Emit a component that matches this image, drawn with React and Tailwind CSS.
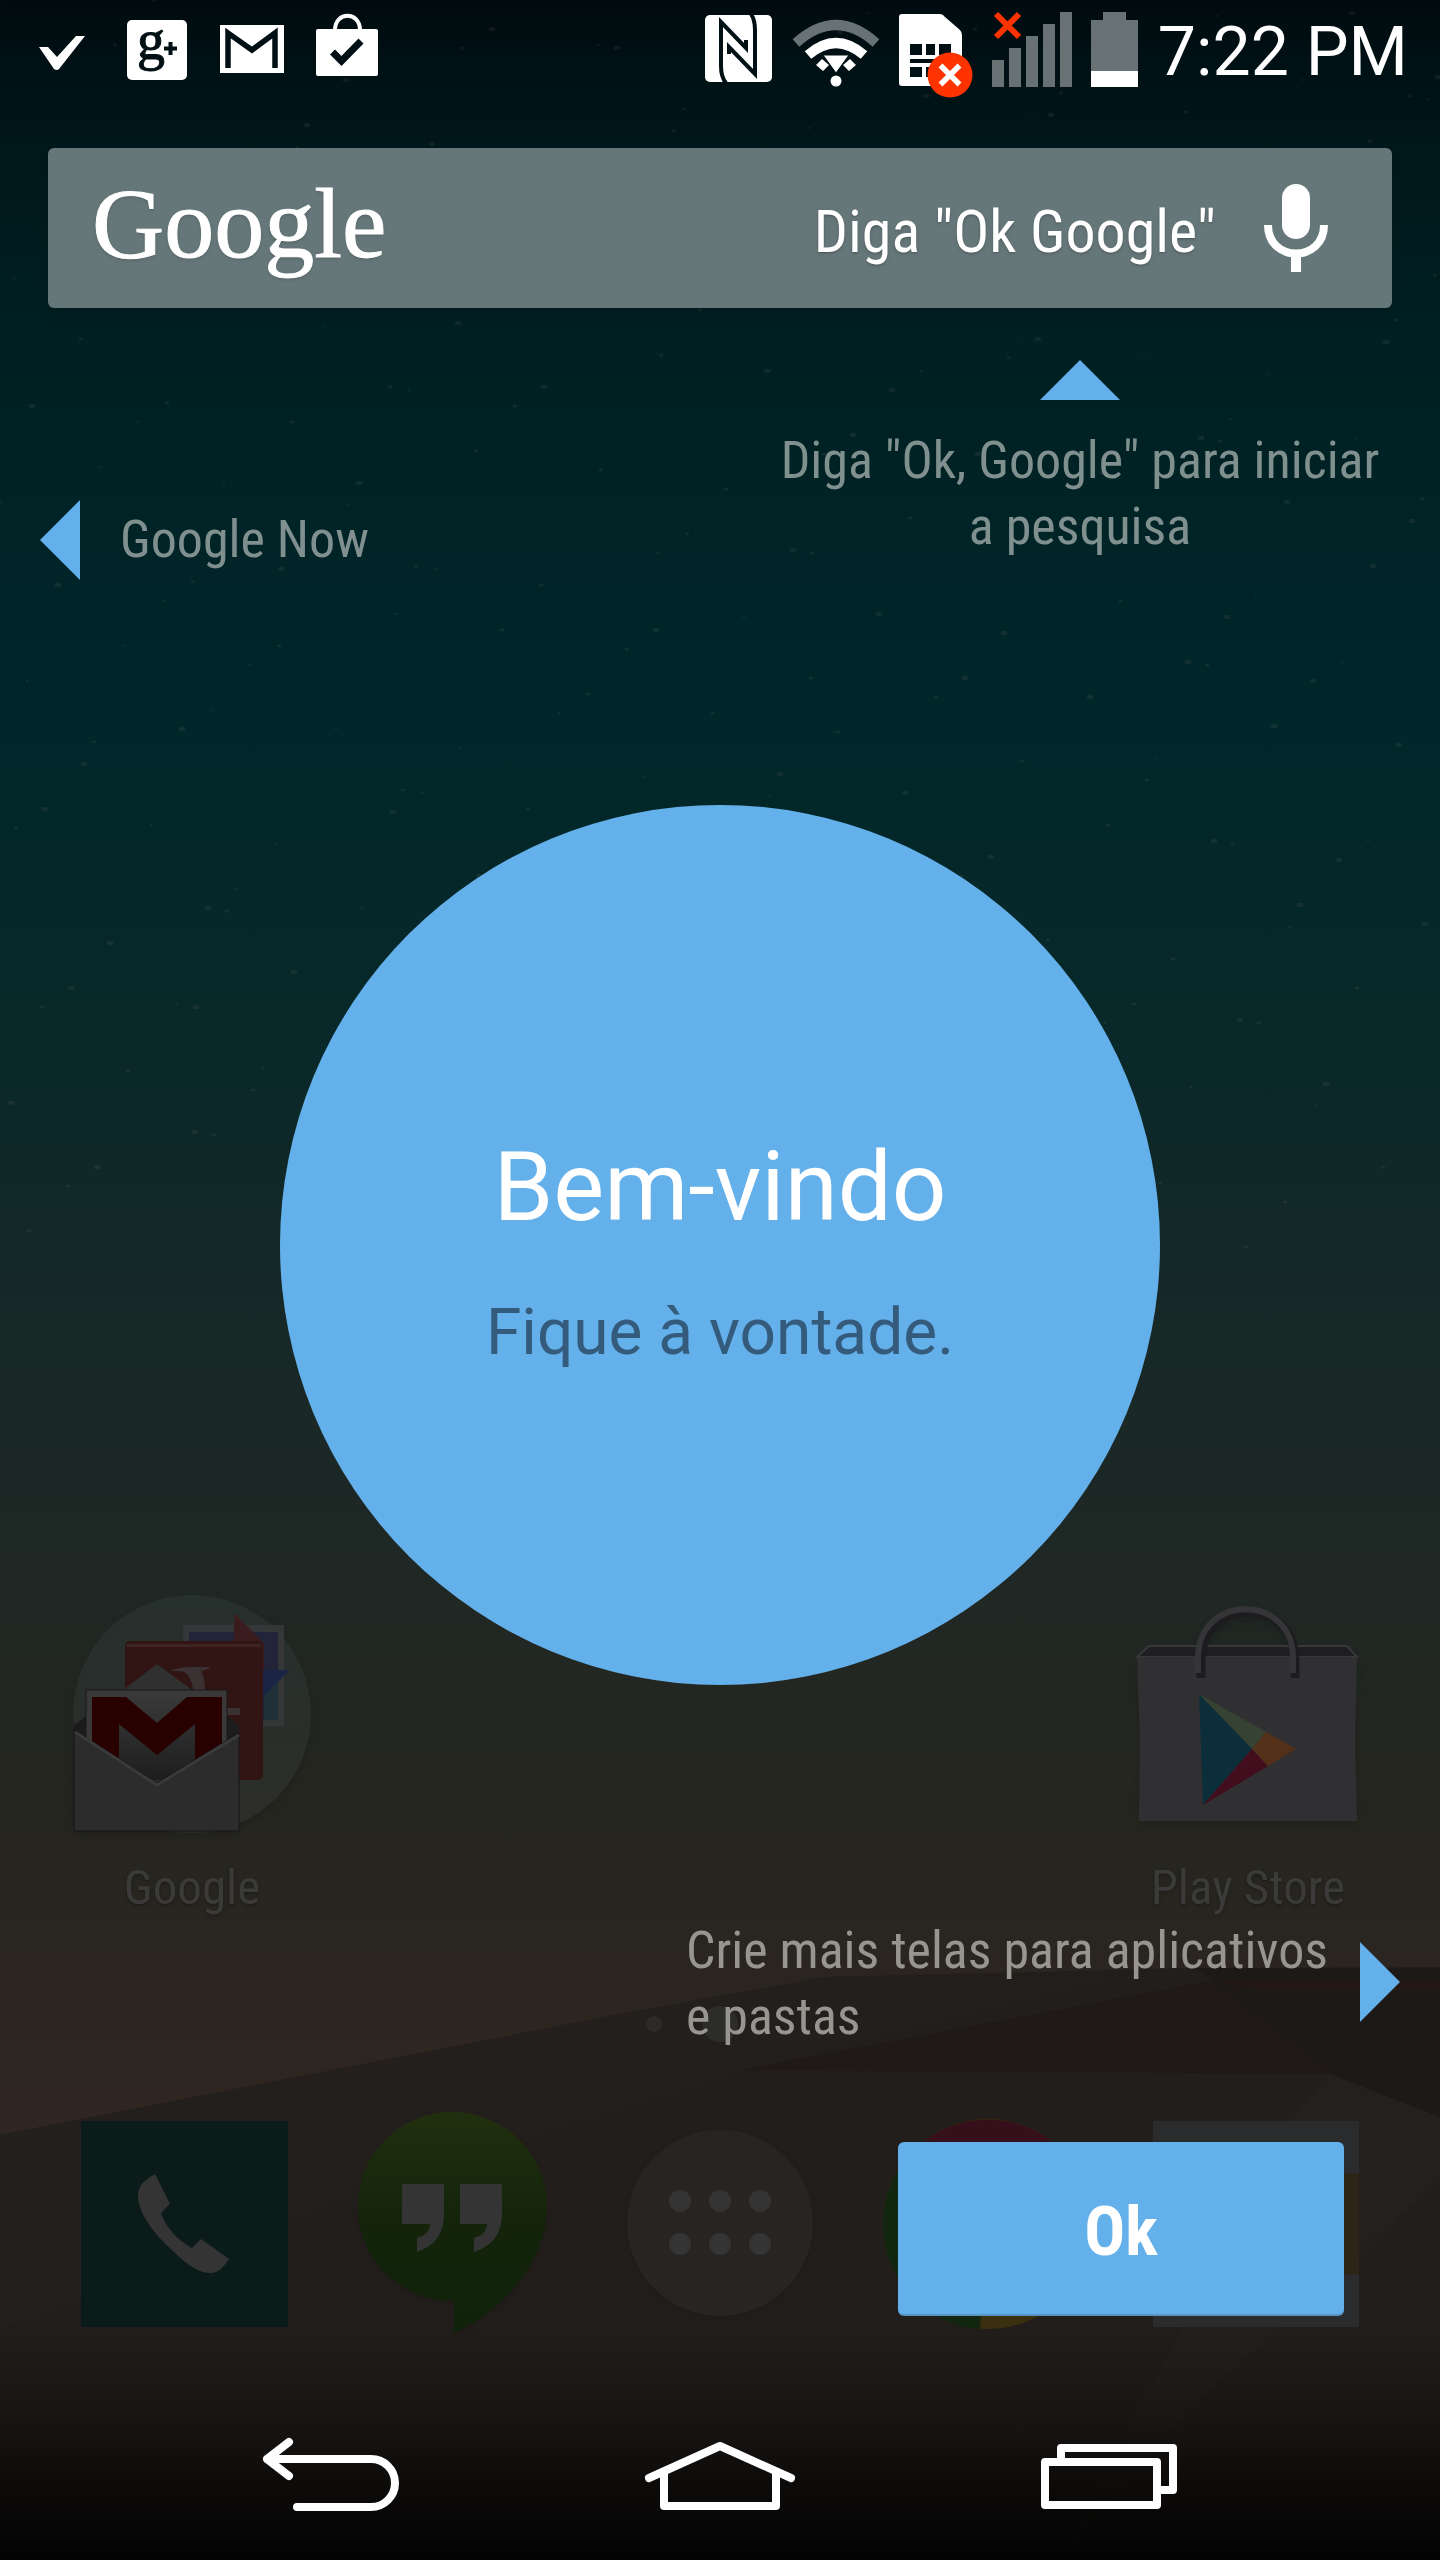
// src/App.jsx
import React from 'react';

// fixed specks for the night sky
const stars = Array.from({ length: 260 }, (_, i) => ({
    x: (i * 733 + (i % 7) * 91) % 1440,
    y: (i * 397 + (i % 11) * 57) % 1250,
    r: 1 + (i % 3) * 0.6,
}));

const Wallpaper = () => (
    <svg
        aria-hidden="true"
        className="col-start-1 row-start-1 h-full w-full"
        viewBox="0 0 1440 2560"
        preserveAspectRatio="none"
    >
        <defs>
            <linearGradient id="sky" x1="0" y1="0" x2="0" y2="2140" gradientUnits="userSpaceOnUse">
                <stop offset="0" stopColor="#000b0f" />
                <stop offset="0.06" stopColor="#00161a" />
                <stop offset="0.16" stopColor="#002023" />
                <stop offset="0.34" stopColor="#00272a" />
                <stop offset="0.48" stopColor="#082829" />
                <stop offset="0.6" stopColor="#152827" />
                <stop offset="0.73" stopColor="#1f2825" />
                <stop offset="0.83" stopColor="#252620" />
                <stop offset="0.92" stopColor="#2a2520" />
                <stop offset="1" stopColor="#302621" />
            </linearGradient>
            <linearGradient id="fade" x1="0" y1="0" x2="0" y2="1">
                <stop offset="0" stopColor="#000" stopOpacity="0" />
                <stop offset="0.4" stopColor="#000" stopOpacity="0.3" />
                <stop offset="0.75" stopColor="#000" stopOpacity="0.7" />
                <stop offset="1" stopColor="#000" stopOpacity="0.9" />
            </linearGradient>
        </defs>
        <rect width="1440" height="2560" fill="url(#sky)" />
        { stars.map((star, index) => (
            <ellipse key={ index } cx={ star.x } cy={ star.y } rx={ star.r * 1.5 } ry={ star.r } fill="#d8b0a0" opacity="0.08" />
        )) }
        <path d="M0 2135L620 2014L827 1977L1195 1968L1440 1967V2560H0Z" fill="#221e1b" />
        <path d="M0 2135L620 2014L827 1977L1120 1975L740 2072L420 2170L0 2330Z" fill="#231f1c" />
        <path d="M740 2070L1215 1980L1440 1985V2117L1330 2074Z" fill="#1f1a17" />
        <path d="M1195 1968H1440V2117L1330 2072Z" fill="#1d1916" />
        <path d="M1215 1981H1440V1990H1260Z" fill="#241814" />
        <path d="M1330 2074L1440 2117V2180L1200 2400L1060 2560L1290 2120Z" fill="#24201d" />
        <rect y="2320" width="1440" height="240" fill="url(#fade)" />
    </svg>
);

const StatusBar = () => (
    <header className="flex h-[100px] items-center justify-between pl-[30px] pr-8 text-white">
        <div className="flex gap-[31px]">
            <svg className="h-[100px] w-16" viewBox="30 0 64 100" fill="#fff">
                <path d="M39 47H48L57 57L76 36H85L59 69Q57 71 54 69Z" />
            </svg>
            <svg className="h-[100px] w-16" viewBox="124 0 64 100">
                <rect x="126" y="20" width="60" height="60" rx="5" fill="#fff" />
                <text x="136" y="59" fontFamily="Liberation Serif, serif" fontSize="56" fill="#001015" stroke="#001015">g</text>
                <path d="M163 48.500H176M169.500 42V55" stroke="#001015" strokeWidth="4" />
            </svg>
            <svg className="h-[100px] w-16" viewBox="220 0 64 100">
                <path d="M220 25H284V73H220Z" fill="#fff" />
                <path d="M228 68V33L252 50L275 33V68" fill="none" stroke="#001015" strokeWidth="5.500" />
            </svg>
            <svg className="h-[100px] w-16" viewBox="315 0 64 100">
                <rect x="316" y="29" width="62" height="47" rx="2" fill="#fff" />
                <path d="M335 30C335 11 360 11 360 30" fill="none" stroke="#fff" strokeWidth="4" />
                <path d="M332.500 52L341.500 61L361 41" fill="none" stroke="#001015" strokeWidth="7" />
            </svg>
        </div>
        <div className="flex items-center gap-[19px]">
            <svg className="h-[100px] w-[68px]" viewBox="708 0 68 100">
                <rect x="708" y="15" width="67" height="67" rx="5" fill="#fff" />
                <path d="M729 83Q724 77 724 66V22L749 48V40" fill="none" stroke="#001015" strokeWidth="4" />
                <path d="M754 14Q758 20 758 30V74L732 47V54" fill="none" stroke="#001015" strokeWidth="4" />
            </svg>
            <svg className="h-[100px] w-[88px]" viewBox="794 0 88 100">
                <path d="M798 43Q838 7 878 43" fill="none" stroke="#687174" strokeWidth="10" />
                <path d="M810 55Q838 31 866 55" fill="none" stroke="#fff" strokeWidth="10" />
                <path d="M824 59L818 65L825 71L831 65ZM852 59L858 65L851 71L845 65Z" fill="#fff" />
                <path d="M825 55H851L838 73Z" fill="#fff" stroke="#001015" />
                <circle cx="838" cy="81" r="5.500" fill="#fff" />
            </svg>
            <svg className="h-[100px] w-[74px]" viewBox="900 0 74 100">
                <path d="M903 14H941Q944 14 946 17L961 30Q963 32 963 35V83Q963 86 960 86H903Q900 86 900 83V17Q900 14 903 14Z" fill="#fff" />
                <path d="M911 44H923V55H911ZM927 44H936V55H927ZM940 44H952V55H940ZM911 59H952V63H911ZM911 67H923V77H911ZM927 67H936V77H927Z" fill="#001015" />
                <circle cx="951" cy="75" r="22.500" fill="#ff3300" />
                <path d="M941.500 65.500L960.500 84.500M960.500 65.500L941.500 84.500" stroke="#fff" strokeWidth="5.500" />
            </svg>
            <svg className="h-[100px] w-20" viewBox="991 0 80 100">
                <path d="M995 14L1018 37M1018 14L995 37" stroke="#ff3300" strokeWidth="6" />
                <path d="M991 60H1003V87H991ZM1008 48H1020V87H1008ZM1025 36H1037V87H1025ZM1042 24H1054V87H1042ZM1059 12H1071V87H1059Z" fill="#687174" />
            </svg>
            <svg className="h-[100px] w-12" viewBox="1094 0 48 100">
                <path d="M1094 20H1106V12H1129V20H1141V71H1094Z" fill="#687174" />
                <path d="M1094 71H1141V87H1094Z" fill="#fff" />
            </svg>
            <time className="pt-1 font-[Roboto,sans-serif] text-[68px] leading-[96px]">7:22 PM</time>
        </div>
    </header>
);

const SearchBar = () => (
    <div className="mx-12 mt-12 flex h-40 items-center justify-between rounded-md bg-[#66777a] pl-11 pr-16 text-white shadow-lg">
        <span className="pb-2 font-['Liberation_Serif',serif] text-[100px] leading-[100px] [-webkit-text-stroke:1px_white] text-shadow-md">Google</span>
        <button type="button" className="flex items-center gap-12 text-shadow-md">
            <span className="pt-2 text-[60px]">Diga "Ok Google"</span>
            <svg aria-hidden="true" className="h-[88px] w-16" viewBox="1264 184 64 88">
                <rect x="1282" y="184" width="28" height="55" rx="14" fill="#fff" />
                <path d="M1268 225C1268 263 1324 263 1324 225" fill="none" stroke="#fff" strokeWidth="8" />
                <path d="M1291 254H1301V272H1291Z" fill="#fff" />
            </svg>
        </button>
    </div>
);

const GoogleFolder = () => (
    <svg aria-hidden="true" className="h-60 w-60 drop-shadow-lg" viewBox="72 1594 240 240">
        <defs>
            <linearGradient id="folder" x1="0" y1="0" x2="0" y2="1">
                <stop offset="0" stopColor="#26302d" />
                <stop offset="1" stopColor="#2d2d28" />
            </linearGradient>
            <linearGradient id="letter" x1="0" y1="0" x2="0" y2="1">
                <stop offset="0" stopColor="#383838" />
                <stop offset="1" stopColor="#1e1e1e" />
            </linearGradient>
        </defs>
        <circle cx="192" cy="1714" r="119" fill="url(#folder)" />
        <rect x="183" y="1625" width="101" height="101" fill="#343638" />
        <rect x="189" y="1632" width="89" height="88" fill="#222539" />
        <path d="M264 1675H278V1720H264Z" fill="#203038" />
        <path d="M234 1613L264 1643V1675H234Z" fill="#3a1c1e" />
        <path d="M262 1670H290L262 1698Z" fill="#1c2444" />
        <rect x="125" y="1641" width="138" height="139" rx="5" fill="#301514" />
        <path d="M127 1644H261V1647H127Z" fill="#3d2422" />
        <path d="M170 1671Q180 1667 190 1667H211Q207 1670 201 1671Q205 1677 205 1690H193Q191 1672 180 1671ZM224 1708H240V1715H224Z" fill="#3a3232" />
        <path d="M74 1725L86 1716H227L239 1725V1750H74Z" fill="#1c1c1c" />
        <path d="M123 1690L157 1664L192 1690Z" fill="#303030" />
        <rect x="86" y="1690" width="141" height="86" fill="#393939" stroke="#181818" />
        <path d="M92 1697H222V1780H92Z" fill="url(#letter)" />
        <path d="M92 1697H126L157 1723L187 1697H222V1770H195V1724L157 1755L119 1724V1770H92Z" fill="#290000" />
        <path d="M74 1730L157 1783L239 1733V1831H74Z" fill="#2c2c2c" stroke="#161616" />
        <path d="M75 1732L157 1785L239 1735" fill="none" stroke="#3a3a3a" strokeWidth="3" />
    </svg>
);

const PlayStore = () => (
    <svg aria-hidden="true" className="h-60 w-60 drop-shadow-lg" viewBox="1129 1594 240 240">
        <path d="M1138 1657L1150 1646H1348L1358 1657Z" fill="#1e1e20" stroke="#38383a" strokeWidth="2" />
        <path d="M1138 1657H1358L1356 1740L1358 1821H1140L1141 1740Z" fill="#303032" />
        <path d="M1202 1678V1661C1202 1596 1296 1596 1296 1661V1678" fill="none" stroke="#1c1c1e" strokeWidth="9" />
        <path d="M1199 1673V1658C1199 1593 1294 1593 1294 1658V1673" fill="none" stroke="#353537" strokeWidth="6" />
        <path d="M1200 1694L1267 1732L1253 1749Z" fill="#364232" />
        <path d="M1200 1694L1253 1749L1204 1805Z" fill="#0c2e3a" />
        <path d="M1204 1805L1253 1749L1269 1766Z" fill="#420d1c" />
        <path d="M1267 1732L1297 1749L1269 1766L1253 1749Z" fill="#543019" />
    </svg>
);

const homeApps = [
    { name: 'Google', Icon: GoogleFolder },
    { name: 'Play Store', Icon: PlayStore },
];

const PhoneIcon = () => (
    <svg aria-hidden="true" className="h-[222px] w-[212px]" viewBox="78 2112 212 222">
        <rect x="81" y="2121" width="207" height="206" fill="#0a1b1a" />
        { [30, 45, 60, 75, 90].map((radius) => (
            <circle key={ radius } cx="184" cy="2224" r={ radius } fill="none" stroke="#0b1e1d" />
        )) }
        <path d="M155 2174L170 2204Q162 2211 161 2214Q170 2236 192 2248L201 2239L229 2259Q221 2272 212 2273Q196 2274 174 2252Q136 2218 138 2192Q140 2182 155 2174Z" fill="#343434" />
    </svg>
);

const HangoutsIcon = () => (
    <svg aria-hidden="true" className="h-[222px] w-[212px] drop-shadow-md" viewBox="346 2112 212 222">
        <defs>
            <linearGradient id="hangouts" x1="0" y1="0" x2="0" y2="1">
                <stop offset="0" stopColor="#20300f" />
                <stop offset="0.5" stopColor="#13240b" />
                <stop offset="1" stopColor="#102209" />
            </linearGradient>
        </defs>
        <path d="M452 2112C504 2112 547 2154 547 2207C547 2262 502 2311 454 2333V2301C400 2301 358 2259 358 2207C358 2154 400 2112 452 2112Z" fill="url(#hangouts)" />
        <path d="M402 2184H444V2214Q444 2243 417 2252V2238Q430 2234 430 2224H402ZM460 2184H502V2214Q502 2243 474 2252V2238Q487 2234 487 2224H460Z" fill="#343434" />
    </svg>
);

const AppsIcon = () => (
    <svg aria-hidden="true" className="h-[222px] w-[212px] drop-shadow-md" viewBox="614 2112 212 222">
        <circle cx="720" cy="2223" r="93" fill="#272421" />
        { [680, 720, 760].map((x) => (
            <g key={ x } fill="#343434">
                <circle cx={ x } cy="2201" r="11" />
                <circle cx={ x } cy="2244" r="11" />
            </g>
        )) }
    </svg>
);

const ChromeIcon = () => (
    <svg aria-hidden="true" className="h-[222px] w-[212px]" viewBox="882 2112 212 222">
        <circle cx="988" cy="2224" r="105" fill="#3a3010" />
        <path d="M988 2224L897 2172A105 105 0 0 1 1079 2172Z" fill="#35101a" />
        <path d="M988 2224L897 2172A105 105 0 0 0 980 2329Z" fill="#12260f" />
    </svg>
);

const GalleryIcon = () => (
    <svg aria-hidden="true" className="h-[222px] w-[212px]" viewBox="1150 2112 212 222">
        <rect x="1153" y="2121" width="206" height="206" fill="#2a2b2c" />
        <rect x="1162" y="2173" width="197" height="102" fill="#2c2517" />
    </svg>
);

const dockApps = [
    { name: 'Telefone', Icon: PhoneIcon },
    { name: 'Hangouts', Icon: HangoutsIcon },
    { name: 'Aplicativos', Icon: AppsIcon },
    { name: 'Chrome', Icon: ChromeIcon },
    { name: 'Galeria', Icon: GalleryIcon },
];

const NavBar = () => (
    <nav className="flex h-36 justify-center gap-[229px]">
        <button type="button" aria-label="Voltar">
            <svg className="h-36 w-40" viewBox="251 2416 160 144" fill="none" stroke="#fff" strokeWidth="8" strokeLinecap="round" strokeLinejoin="round">
                <path d="M289 2442L267 2459L289 2476M267 2459H371A24 24 0 0 1 371 2507H297" />
            </svg>
        </button>
        <button type="button" aria-label="Início">
            <svg className="h-36 w-40" viewBox="640 2416 160 144" fill="none" stroke="#fff" strokeWidth="8" strokeLinecap="round" strokeLinejoin="round">
                <path d="M649 2478L720 2446L791 2478M664 2474V2506H776V2474" />
            </svg>
        </button>
        <button type="button" aria-label="Recentes">
            <svg className="h-36 w-40" viewBox="1029 2416 160 144" fill="none" stroke="#fff" strokeWidth="8" strokeLinejoin="round">
                <path d="M1045 2462H1157V2505H1045ZM1061 2458V2448H1173V2490H1160" />
            </svg>
        </button>
    </nav>
);

const HomeScreen = () => (
    <div className="col-start-1 row-start-1 flex flex-col">
        <StatusBar />
        <SearchBar />
        <div className="flex-1" />
        <div className="flex justify-between px-4">
            { homeApps.map(({ name, Icon }) => (
                <div key={ name } className="flex w-[352px] flex-col items-center gap-[22px]">
                    <Icon />
                    <span className="text-[49px] leading-[64px] text-[#3a3a38] text-shadow-md">{ name }</span>
                </div>
            )) }
        </div>
        <div className="mt-[86px] grid grid-cols-[1fr_36px_1fr] items-center gap-10">
            <span className="h-4 w-4 justify-self-end rounded-full bg-[#2c2b2a]" />
            <span className="h-9 w-9 rounded-full bg-[#2c2c2b]" />
        </div>
        <div className="mb-[82px] mt-[70px] flex justify-between px-[78px]">
            { dockApps.map(({ name, Icon }) => (
                <button key={ name } type="button" aria-label={ name }>
                    <Icon />
                </button>
            )) }
        </div>
        <NavBar />
    </div>
);

const WelcomeGuide = () => (
    <div className="col-start-1 row-start-1 flex flex-col justify-between pb-[244px] pt-[360px] text-[52px] leading-[66px]">
        <div className="grid grid-cols-2 text-[#80908f]">
            <div className="flex items-center gap-10 pl-10 pt-[140px]">
                <svg aria-hidden="true" className="h-20 w-10" viewBox="0 0 40 80"><path d="M0 40L40 0V80Z" fill="#64b0ea" /></svg>
                <p>Google Now</p>
            </div>
            <div className="flex flex-col items-center gap-7 text-center">
                <svg aria-hidden="true" className="h-10 w-20" viewBox="0 0 80 40"><path d="M0 40L40 0L80 40Z" fill="#64b0ea" /></svg>
                <p>Diga "Ok, Google" para iniciar<br />a pesquisa</p>
            </div>
        </div>

        <div className="flex h-[880px] w-[880px] flex-col items-center justify-center gap-[52px] self-center rounded-full bg-[#64b0ea] pt-3 font-[Roboto,sans-serif]">
            <h1 className="text-[96px] leading-[112px] text-white">Bem-vindo</h1>
            <p className="text-[64px] leading-[76px] text-[#345b7b]">Fique à vontade.</p>
        </div>

        <div className="flex flex-col items-end">
            <div className="flex items-start gap-8 pr-10 pt-2">
                <p className="text-[#989490]">Crie mais telas para aplicativos<br />e pastas</p>
                <svg aria-hidden="true" className="mt-6 h-20 w-10" viewBox="0 0 40 80"><path d="M40 40L0 0V80Z" fill="#64b0ea" /></svg>
            </div>
            <button type="button" className="mr-24 mt-[92px] h-[174px] w-[446px] rounded-md border-b-2 border-[#5795c5] bg-[#64b0ea] pt-2 text-[68px] font-bold text-white">
                Ok
            </button>
        </div>
    </div>
);

const App = () => (
    <main className="grid min-h-screen grid-cols-1 bg-black font-['Roboto_Condensed',Roboto,sans-serif]">
        <Wallpaper />
        <HomeScreen />
        <WelcomeGuide />
    </main>
);

export default App;
